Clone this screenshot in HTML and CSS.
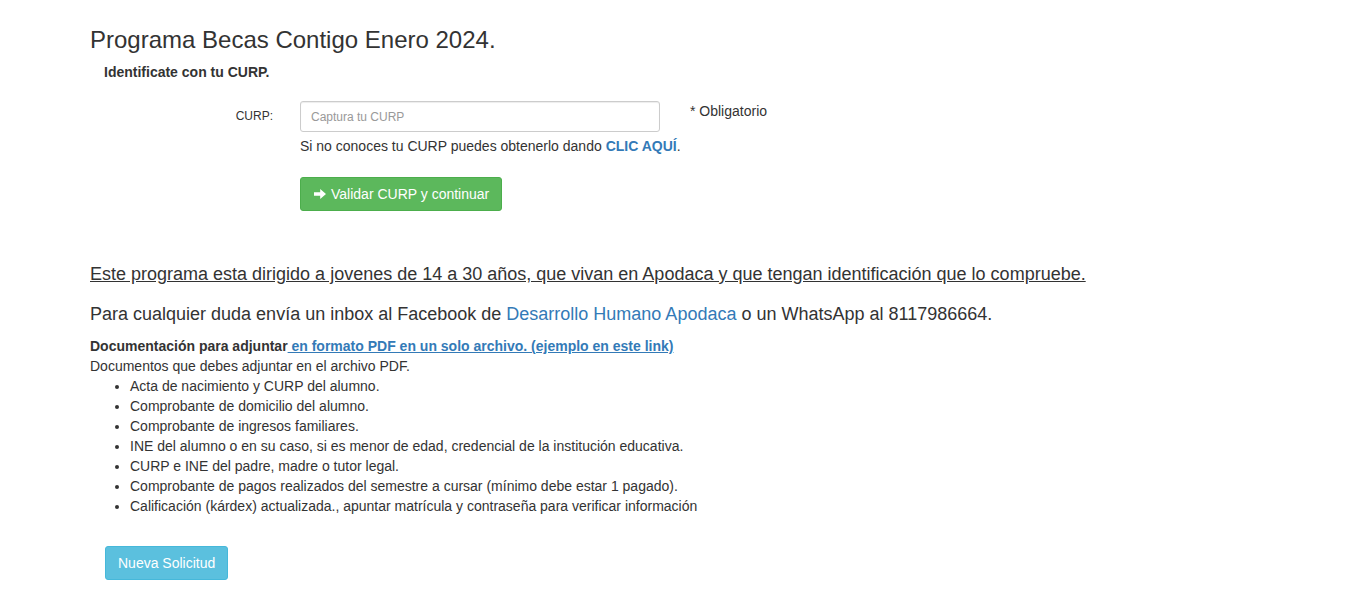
FILE: index.html
```html
<!DOCTYPE html>
<html lang="es">
<head>
<meta charset="utf-8">
<title>Programa Becas Contigo Enero 2024</title>
<link rel="stylesheet" href="styles.css">
</head>
<body>
<div class="container">
  <h3 class="title">Programa Becas Contigo Enero 2024.</h3>
  <p class="subtitle">Identificate con tu CURP.</p>
  <form class="form">
    <div class="row">
      <label class="label" for="curp">CURP:</label>
      <div class="field">
        <input id="curp" class="input" type="text" placeholder="Captura tu CURP">
        <p class="help">Si no conoces tu CURP puedes obtenerlo dando <a class="strong-link" href="#">CLIC AQUÍ</a>.</p>
      </div>
      <span class="required">* Obligatorio</span>
    </div>
    <div class="row">
      <span class="label"></span>
      <div class="field">
        <button type="button" class="btn btn-success"><svg class="arrow" viewBox="0 0 14 14" width="14" height="14"><path d="M1 5.2h6.2V2L13 7l-5.8 5V8.8H1z" fill="#fff"/></svg> Validar CURP y continuar</button>
      </div>
    </div>
  </form>

  <p class="lead underline">Este programa esta dirigido a jovenes de 14 a 30 años, que vivan en Apodaca y que tengan identificación que lo compruebe.</p>
  <p class="lead">Para cualquier duda envía un inbox al Facebook de <a class="link" href="#">Desarrollo Humano Apodaca</a> o un WhatsApp al 8117986664.</p>

  <div class="docs">
    <p class="docs-head"><b>Documentación para adjuntar</b><a class="ulink" href="#"> en formato PDF en un solo archivo. (ejemplo en este link)</a></p>
    <p class="docs-sub">Documentos que debes adjuntar en el archivo PDF.</p>
    <ul class="list">
      <li>Acta de nacimiento y CURP del alumno.</li>
      <li>Comprobante de domicilio del alumno.</li>
      <li>Comprobante de ingresos familiares.</li>
      <li>INE del alumno o en su caso, si es menor de edad, credencial de la institución educativa.</li>
      <li>CURP e INE del padre, madre o tutor legal.</li>
      <li>Comprobante de pagos realizados del semestre a cursar (mínimo debe estar 1 pagado).</li>
      <li>Calificación (kárdex) actualizada., apuntar matrícula y contraseña para verificar información</li>
    </ul>
  </div>

  <div class="actions">
    <button type="button" class="btn btn-info">Nueva Solicitud</button>
  </div>
</div>
</body>
</html>
```

FILE: styles.css
```css
* { box-sizing: border-box; }
html, body { margin: 0; padding: 0; background: #fff; }
body {
  font-family: "Liberation Sans", Arial, Helvetica, sans-serif;
  color: #333;
  font-size: 14px;
  line-height: 1.42857;
}
.container {
  padding: 24px 0 0 90px;
}
.title {
  margin: 0;
  font-size: 24px;
  font-weight: 400;
  line-height: 32px;
}
.subtitle {
  margin: 6px 0 0 14px;
  font-size: 14px;
  font-weight: 700;
  line-height: 20px;
}
.form { margin-top: 19px; }
.row {
  display: flex;
  align-items: flex-start;
}
.row + .row { margin-top: 21px; }
.label {
  width: 210px;
  padding: 7px 27px 0 0;
  text-align: right;
  font-size: 12px;
  font-weight: 400;
  line-height: 17px;
}
.field { width: 360px; }
.input {
  display: block;
  width: 360px;
  height: 31px;
  padding: 5px 10px;
  border: 1px solid #ccc;
  border-radius: 3px;
  font: 12px "Liberation Sans", Arial, sans-serif;
  color: #555;
  box-shadow: inset 0 1px 1px rgba(0,0,0,.075);
}
.input::placeholder { color: #999; }
.help {
  margin: 4px 0 0;
  font-size: 14px;
  line-height: 20px;
  white-space: nowrap;
}
.strong-link { color: #337ab7; font-weight: 700; text-decoration: none; }
.required {
  margin-left: 30px;
  font-size: 14px;
  line-height: 20px;
}
.btn {
  display: inline-flex;
  align-items: center;
  gap: 4px;
  height: 34px;
  padding: 0 12px;
  border: 1px solid transparent;
  border-radius: 3px;
  font: 14px "Liberation Sans", Arial, sans-serif;
  color: #fff;
  cursor: pointer;
}
.btn-success { background: #5cb85c; border-color: #4cae4c; }
.btn-info { background: #5bc0de; border-color: #46b8da; }
.arrow { display: block; }
.lead {
  margin: 0;
  font-size: 18px;
  line-height: 24px;
}
.underline { text-decoration: underline; margin-top: 51px; }
.lead + .lead { margin-top: 16px; }
.link { color: #337ab7; text-decoration: none; }
.docs { margin-top: 11px; font-size: 14px; line-height: 20px; }
.docs p { margin: 0; }
.docs-head { line-height: 19px; }
.ulink { color: #337ab7; text-decoration: underline; font-weight: 700; }
.list {
  margin: 0;
  padding-left: 40px;
  list-style: disc;
}
.actions { margin: 30px 0 0 15px; }
```
